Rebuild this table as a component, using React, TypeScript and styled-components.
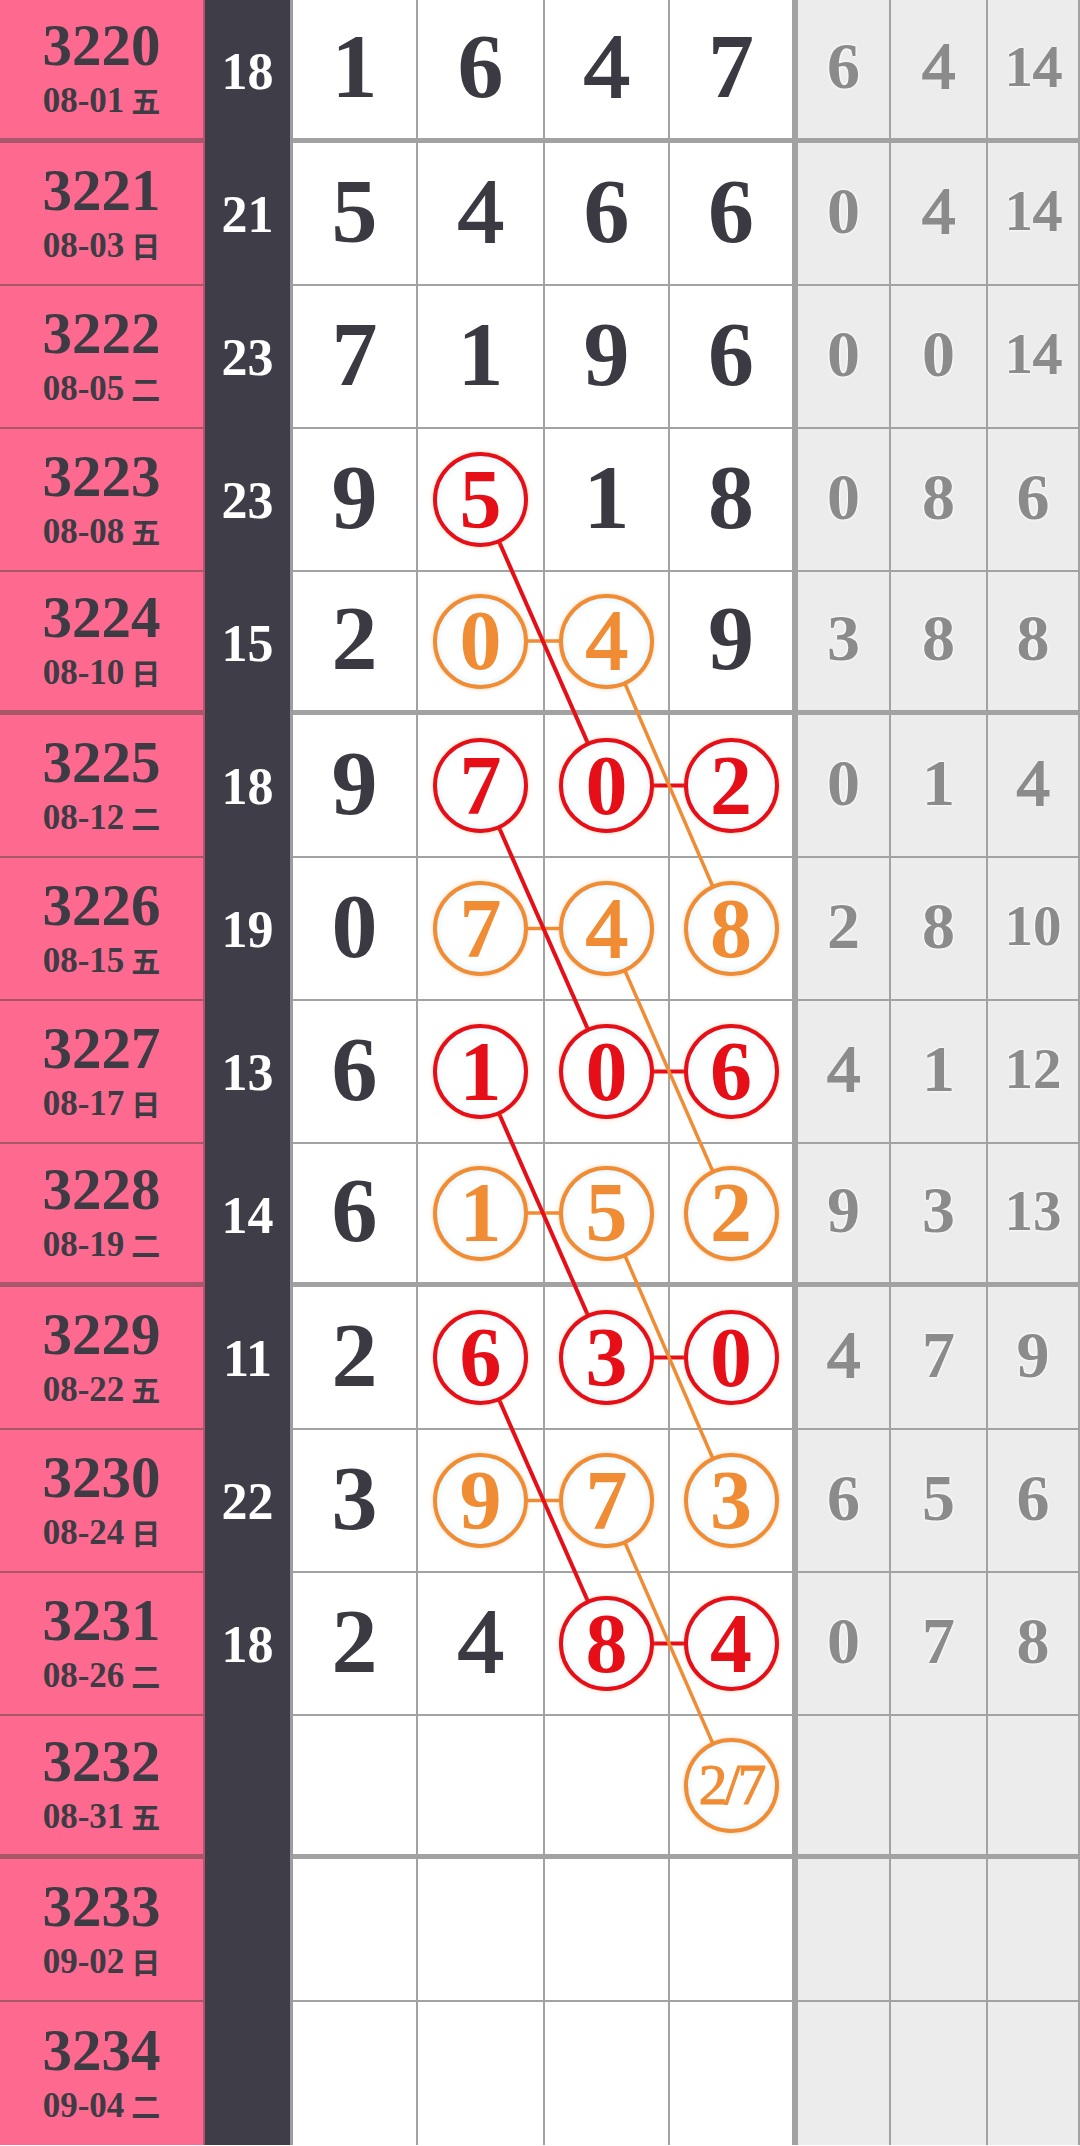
import React from 'react';
import styled, { createGlobalStyle } from 'styled-components';

const ROW_H = 143;
const RED = '#e60f17';
const ORANGE = '#f08c34';
const LINE = '#a2a2a2';

// column geometry of the digit area (left edge, width, right border)
const DIGIT_LEFT = [293, 418, 545, 670];
const DIGIT_W = [125, 127, 125, 128];
const DIGIT_BR = [2, 2, 2, 6];

type Mark = 'R' | 'O' | null;

type Row = {
  issue: string;
  date: string;
  week: string;
  sum?: number;
  digits: (string | null)[];
  marks: Mark[];
  stats: (number | null)[];
};

const rows: Row[] = [
  { issue: '3220', date: '08-01', week: '五', sum: 18, digits: ['1', '6', '4', '7'], marks: [null, null, null, null], stats: [6, 4, 14] },
  { issue: '3221', date: '08-03', week: '日', sum: 21, digits: ['5', '4', '6', '6'], marks: [null, null, null, null], stats: [0, 4, 14] },
  { issue: '3222', date: '08-05', week: '二', sum: 23, digits: ['7', '1', '9', '6'], marks: [null, null, null, null], stats: [0, 0, 14] },
  { issue: '3223', date: '08-08', week: '五', sum: 23, digits: ['9', '5', '1', '8'], marks: [null, 'R', null, null], stats: [0, 8, 6] },
  { issue: '3224', date: '08-10', week: '日', sum: 15, digits: ['2', '0', '4', '9'], marks: [null, 'O', 'O', null], stats: [3, 8, 8] },
  { issue: '3225', date: '08-12', week: '二', sum: 18, digits: ['9', '7', '0', '2'], marks: [null, 'R', 'R', 'R'], stats: [0, 1, 4] },
  { issue: '3226', date: '08-15', week: '五', sum: 19, digits: ['0', '7', '4', '8'], marks: [null, 'O', 'O', 'O'], stats: [2, 8, 10] },
  { issue: '3227', date: '08-17', week: '日', sum: 13, digits: ['6', '1', '0', '6'], marks: [null, 'R', 'R', 'R'], stats: [4, 1, 12] },
  { issue: '3228', date: '08-19', week: '二', sum: 14, digits: ['6', '1', '5', '2'], marks: [null, 'O', 'O', 'O'], stats: [9, 3, 13] },
  { issue: '3229', date: '08-22', week: '五', sum: 11, digits: ['2', '6', '3', '0'], marks: [null, 'R', 'R', 'R'], stats: [4, 7, 9] },
  { issue: '3230', date: '08-24', week: '日', sum: 22, digits: ['3', '9', '7', '3'], marks: [null, 'O', 'O', 'O'], stats: [6, 5, 6] },
  { issue: '3231', date: '08-26', week: '二', sum: 18, digits: ['2', '4', '8', '4'], marks: [null, null, 'R', 'R'], stats: [0, 7, 8] },
  { issue: '3232', date: '08-31', week: '五', digits: [null, null, null, '2/7'], marks: [null, null, null, 'O'], stats: [null, null, null] },
  { issue: '3233', date: '09-02', week: '日', digits: [null, null, null, null], marks: [null, null, null, null], stats: [null, null, null] },
  { issue: '3234', date: '09-04', week: '二', digits: [null, null, null, null], marks: [null, null, null, null], stats: [null, null, null] },
];

// [row, col, row, col, colour]  -- horizontal links first, then diagonals on top
const links: [number, number, number, number, string][] = [
  [4, 1, 4, 2, ORANGE],
  [5, 2, 5, 3, RED],
  [6, 1, 6, 2, ORANGE],
  [7, 2, 7, 3, RED],
  [8, 1, 8, 2, ORANGE],
  [9, 2, 9, 3, RED],
  [10, 1, 10, 2, ORANGE],
  [11, 2, 11, 3, RED],
  [3, 1, 5, 2, RED],
  [5, 1, 7, 2, RED],
  [7, 1, 9, 2, RED],
  [9, 1, 11, 2, RED],
  [4, 2, 6, 3, ORANGE],
  [6, 2, 8, 3, ORANGE],
  [8, 2, 10, 3, ORANGE],
  [10, 2, 12, 3, ORANGE],
];

const isThick = (i: number) => i % 4 === 0;
const bottomW = (i: number) => (i === rows.length - 1 ? 0 : isThick(i) ? 5 : 2);

const cx = (c: number) => DIGIT_LEFT[c] + (DIGIT_W[c] - DIGIT_BR[c]) / 2;
const cy = (r: number) => r * ROW_H + (ROW_H - bottomW(r)) / 2;

// the "4" of the original face is lighter than the other bold digits
const semi = (on: boolean) =>
  on ? 'font-weight: 400; -webkit-text-stroke: 2px currentColor;' : 'font-weight: 700;';

const GlobalStyle = createGlobalStyle`
  html, body {
    margin: 0;
    padding: 0;
    background: #fff;
  }
  body {
    font-family: "Liberation Serif", "DejaVu Serif", serif;
  }
`;

const Board = styled.div`
  position: relative;
  width: 1080px;
  display: grid;
  grid-template-columns: 205px 88px ${DIGIT_W.map((w) => `${w}px`).join(' ')} 93px 97px 92px;
  grid-auto-rows: ${ROW_H}px;
`;

const IssueCell = styled.div<{ $bw: number }>`
  box-sizing: border-box;
  background: #fe6a8f;
  border-right: 2px solid #b25670;
  border-bottom: ${(p) => p.$bw}px solid #a9566b;
  display: flex;
  flex-direction: column;
  align-items: center;
  justify-content: center;
  color: #3d3c45;
  padding-bottom: 4px;
`;

const IssueNo = styled.div`
  font-size: 59px;
  font-weight: 700;
  line-height: 1;
`;

const DateLine = styled.div`
  margin-top: 8px;
  font-size: 35px;
  font-weight: 700;
  line-height: 1;
  display: flex;
  align-items: center;
  gap: 7px;
`;

const Week = styled.span`
  font-family: "Noto Sans CJK SC", sans-serif;
  font-size: 29px;
  font-weight: 700;
`;

const SumCell = styled.div`
  box-sizing: border-box;
  background: #3e3d48;
  border-right: 3px solid #9c9c9c;
  display: flex;
  align-items: center;
  justify-content: center;
  color: #fff;
  font-size: 52px;
  font-weight: 700;
  line-height: 1;
`;

const DigitCell = styled.div<{ $bw: number; $br: number }>`
  box-sizing: border-box;
  background: #fff;
  border-right: ${(p) => p.$br}px solid ${LINE};
  border-bottom: ${(p) => p.$bw}px solid ${LINE};
  display: flex;
  align-items: center;
  justify-content: center;
  padding-bottom: 6px;
`;

const Plain = styled.span<{ $thin: boolean }>`
  font-size: 92px;
  ${(p) => semi(p.$thin)}
  line-height: 1;
  color: #3b3a42;
  text-shadow: 0 0 2px #fff;
`;

const Ring = styled.span<{ $color: string; $thin: boolean; $small: boolean }>`
  position: relative;
  z-index: 2;
  box-sizing: border-box;
  width: 95px;
  height: 95px;
  margin-top: 6px;
  border: 4px solid ${(p) => p.$color};
  border-radius: 50%;
  background: #fff;
  box-shadow: 0 0 4px rgba(240, 140, 52, 0.35), inset 0 0 6px rgba(170, 225, 255, 0.55);
  display: flex;
  align-items: center;
  justify-content: center;
  color: ${(p) => p.$color};
  font-size: ${(p) => (p.$small ? 58 : 84)}px;
  ${(p) => (p.$small ? 'font-weight: 400; -webkit-text-stroke: 1px currentColor;' : semi(p.$thin))}
  line-height: 1;
  letter-spacing: ${(p) => (p.$small ? '-3px' : '0')};
`;

const StatCell = styled.div<{ $bw: number }>`
  box-sizing: border-box;
  background: #ececec;
  border-right: 2px solid ${LINE};
  border-bottom: ${(p) => p.$bw}px solid ${LINE};
  display: flex;
  align-items: center;
  justify-content: center;
  padding-bottom: 6px;
`;

const Stat = styled.span<{ $wide: boolean }>`
  font-size: ${(p) => (p.$wide ? 57 : 66)}px;
  font-weight: 700;
  line-height: 1;
  color: #8b8b8b;
  text-shadow: 0 0 3px #fff, 0 0 3px #fff;
`;

const Four = styled.span`
  font-weight: 400;
  -webkit-text-stroke: 2px currentColor;
`;

const Links = styled.svg`
  position: absolute;
  left: 0;
  top: 0;
  z-index: 1;
  pointer-events: none;
`;

// renders a stat number with its "4"s in the lighter cut
const statText = (s: number) =>
  String(s)
    .split('')
    .map((ch, k) => (ch === '4' ? <Four key={k}>4</Four> : <React.Fragment key={k}>{ch}</React.Fragment>));

export default function App() {
  return (
    <>
      <GlobalStyle />
      <Board>
        {rows.map((row, i) => {
          const bw = bottomW(i);
          return (
            <React.Fragment key={row.issue}>
              <IssueCell $bw={bw}>
                <IssueNo>{row.issue}</IssueNo>
                <DateLine>
                  {row.date}
                  <Week>{row.week}</Week>
                </DateLine>
              </IssueCell>
              <SumCell>{row.sum ?? ''}</SumCell>
              {row.digits.map((d, c) => {
                const mark = row.marks[c];
                return (
                  <DigitCell key={c} $bw={bw} $br={DIGIT_BR[c]}>
                    {d !== null && mark && (
                      <Ring
                        $color={mark === 'R' ? RED : ORANGE}
                        $thin={mark === 'O' && d === '4'}
                        $small={d.length > 1}
                      >
                        {d}
                      </Ring>
                    )}
                    {d !== null && !mark && <Plain $thin={d === '4'}>{d}</Plain>}
                  </DigitCell>
                );
              })}
              {row.stats.map((s, k) => (
                <StatCell key={k} $bw={bw}>
                  {s !== null && <Stat $wide={s > 9}>{statText(s)}</Stat>}
                </StatCell>
              ))}
            </React.Fragment>
          );
        })}
        <Links width={1080} height={rows.length * ROW_H}>
          {links.map(([r1, c1, r2, c2, color], k) => (
            <line
              key={k}
              x1={cx(c1)}
              y1={cy(r1)}
              x2={cx(c2)}
              y2={cy(r2)}
              stroke={color}
              strokeWidth={color === RED ? 4 : 3.5}
            />
          ))}
        </Links>
      </Board>
    </>
  );
}
